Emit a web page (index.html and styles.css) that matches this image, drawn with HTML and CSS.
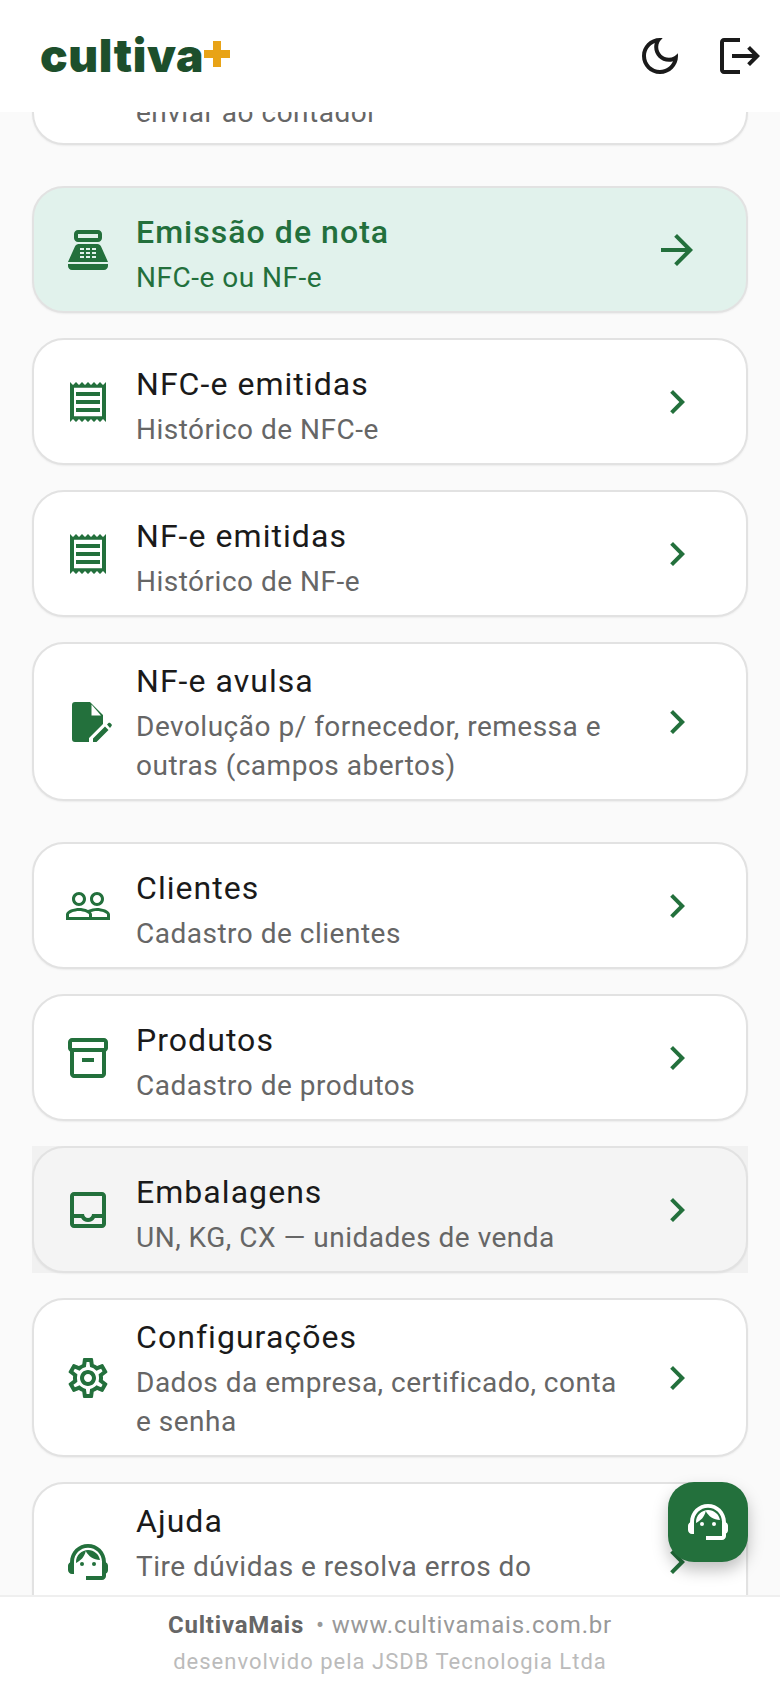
FILE: index.html
```html
<!DOCTYPE html>
<html lang="pt-BR">
<head>
  <meta charset="UTF-8">
  <meta name="viewport" content="width=device-width, initial-scale=1.0">
  <title>CultivaMais</title>
  <link rel="stylesheet" href="styles.css">
</head>
<body>
  <header class="topbar">
    <div class="logo">
      <span class="logo-text">cultiva</span>
      <svg class="logo-plus" viewBox="0 0 26 26"><path d="M9 0h8v9h9v8h-9v9H9v-9H0V9h9z"/></svg>
    </div>
    <div class="topbar-actions">
      <svg class="icon" viewBox="0 0 24 24"><path d="M9.37,5.51C9.19,6.15,9.1,6.82,9.1,7.5c0,4.08,3.32,7.4,7.4,7.4c0.68,0,1.35-0.09,1.99-0.27C17.45,17.19,14.93,19,12,19 c-3.86,0-7-3.14-7-7C5,9.07,6.81,6.55,9.37,5.51z M12,3c-4.97,0-9,4.03-9,9s4.03,9,9,9s9-4.03,9-9c0-0.46-0.04-0.92-0.1-1.36 c-0.98,1.37-2.58,2.26-4.4,2.26c-2.98,0-5.4-2.42-5.4-5.4c0-1.81,0.89-3.42,2.26-4.4C12.92,3.04,12.46,3,12,3L12,3z"/></svg>
      <svg class="icon" viewBox="0 0 24 24"><path d="M17 7l-1.41 1.41L18.17 11H8v2h10.17l-2.58 2.58L17 17l5-5zM4 5h8V3H4c-1.1 0-2 .9-2 2v14c0 1.1.9 2 2 2h8v-2H4V5z"/></svg>
    </div>
  </header>

  <main class="content">
    <div class="menu">
      <section class="group">
        <div class="card card-clipped">
          <div class="card-text card-text-clipped">
            <p class="card-sub">enviar ao contador</p>
          </div>
        </div>
      </section>

      <section class="group">
        <a class="card card-active">
          <svg class="icon card-icon" viewBox="0 0 24 24"><path fill-rule="evenodd" d="M17 2H7c-1.1 0-2 .9-2 2v2c0 1.1.9 2 2 2h10c1.1 0 2-.9 2-2V4c0-1.1-.9-2-2-2zm0 4H7V4h10v2zM20 22H4c-1.1 0-2-.9-2-2v-1h20v1c0 1.1-.9 2-2 2zM18.53 10.19C18.21 9.47 17.49 9 16.7 9H7.3c-.79 0-1.51.47-1.83 1.19L2 18h20l-3.47-7.81zM8 11h2v1H8zm3 0h2v1h-2zm3 0h2v1h-2zM8 13h2v1H8zm3 0h2v1h-2zm3 0h2v1h-2zM8 15h2v1H8zm3 0h2v1h-2zm3 0h2v1h-2z"/></svg>
          <div class="card-text">
            <h2 class="card-title">Emissão de nota</h2>
            <p class="card-sub">NFC-e ou NF-e</p>
          </div>
          <svg class="icon card-arrow" viewBox="0 0 24 24"><path d="M12 4l-1.41 1.41L16.17 11H4v2h12.17l-5.58 5.59L12 20l8-8z"/></svg>
        </a>

        <a class="card">
          <svg class="icon card-icon" viewBox="0 0 24 24"><path d="M19.5 3.5L18 2l-1.5 1.5L15 2l-1.5 1.5L12 2l-1.5 1.5L9 2 7.5 3.5 6 2 4.5 3.5 3 2v20l1.5-1.5L6 22l1.5-1.5L9 22l1.5-1.5L12 22l1.5-1.5L15 22l1.5-1.5L18 22l1.5-1.5L21 22V2l-1.5 1.5zM19 19.09H5V4.91h14v14.18zM6 15h12v2H6zm0-4h12v2H6zm0-4h12v2H6z"/></svg>
          <div class="card-text">
            <h2 class="card-title">NFC-e emitidas</h2>
            <p class="card-sub">Histórico de NFC-e</p>
          </div>
          <svg class="icon card-chevron" viewBox="0 0 24 24"><path d="M10 6L8.59 7.41 13.17 12l-4.58 4.59L10 18l6-6z"/></svg>
        </a>

        <a class="card">
          <svg class="icon card-icon" viewBox="0 0 24 24"><path d="M19.5 3.5L18 2l-1.5 1.5L15 2l-1.5 1.5L12 2l-1.5 1.5L9 2 7.5 3.5 6 2 4.5 3.5 3 2v20l1.5-1.5L6 22l1.5-1.5L9 22l1.5-1.5L12 22l1.5-1.5L15 22l1.5-1.5L18 22l1.5-1.5L21 22V2l-1.5 1.5zM19 19.09H5V4.91h14v14.18zM6 15h12v2H6zm0-4h12v2H6zm0-4h12v2H6z"/></svg>
          <div class="card-text">
            <h2 class="card-title">NF-e emitidas</h2>
            <p class="card-sub">Histórico de NF-e</p>
          </div>
          <svg class="icon card-chevron" viewBox="0 0 24 24"><path d="M10 6L8.59 7.41 13.17 12l-4.58 4.59L10 18l6-6z"/></svg>
        </a>

        <a class="card card-tall">
          <svg class="icon card-icon" viewBox="0 0 48 48"><path d="M11 4h15l13 13v9L25 40v4H11c-2 0-3-1.300-3-3V7c0-1.700 1-3 3-3z"/><path class="icon-cut" d="M27.500 6.500L37 17.500h-9.500z"/><path d="M29 44v-3.500L41 28.500l3.500 3.500-12 12zM43 26.500l1.500-1.500c.5-.5 1.200-.5 1.700 0l1.300 1.300c.5.500.5 1.200 0 1.700L46 30z"/></svg>
          <div class="card-text">
            <h2 class="card-title">NF-e avulsa</h2>
            <p class="card-sub">Devolução p/ fornecedor, remessa e outras (campos abertos)</p>
          </div>
          <svg class="icon card-chevron" viewBox="0 0 24 24"><path d="M10 6L8.59 7.41 13.17 12l-4.58 4.59L10 18l6-6z"/></svg>
        </a>
      </section>

      <section class="group">
        <a class="card">
          <svg class="icon card-icon" viewBox="0 0 24 24"><path d="M16.5 13c-1.2 0-3.07.34-4.5 1-1.43-.67-3.3-1-4.5-1C5.33 13 1 14.08 1 16.25V19h22v-2.75c0-2.170-4.33-3.25-6.500-3.25zm-4 4.500h-10v-1.250c0-.54 2.560-1.750 5-1.750s5 1.210 5 1.750v1.250zm9 0H14v-1.250c0-.46-.2-.86-.52-1.220.88-.3 1.960-.53 3.020-.53 2.440 0 5 1.210 5 1.750v1.250zM7.500 12c1.930 0 3.500-1.570 3.500-3.500S9.430 5 7.500 5 4 6.570 4 8.500 5.570 12 7.500 12zm0-5.500c1.100 0 2 .9 2 2s-.9 2-2 2-2-.9-2-2 .9-2 2-2zm9 5.500c1.930 0 3.500-1.570 3.500-3.500S18.430 5 16.500 5 13 6.570 13 8.500s1.570 3.500 3.500 3.500zm0-5.500c1.100 0 2 .9 2 2s-.9 2-2 2-2-.9-2-2 .9-2 2-2z"/></svg>
          <div class="card-text">
            <h2 class="card-title">Clientes</h2>
            <p class="card-sub">Cadastro de clientes</p>
          </div>
          <svg class="icon card-chevron" viewBox="0 0 24 24"><path d="M10 6L8.59 7.41 13.17 12l-4.58 4.59L10 18l6-6z"/></svg>
        </a>

        <a class="card">
          <svg class="icon card-icon" viewBox="0 0 24 24"><path d="M20 2H4c-1 0-2 .9-2 2v3.010c0 .72.43 1.340 1 1.690V20c0 1.100 1.100 2 2 2h14c.9 0 2-.9 2-2V8.700c.57-.35 1-.97 1-1.690V4c0-1.100-1-2-2-2zm-1 18H5V9h14v11zm1-13H4V4h16v3zM9 12h6v2H9z"/></svg>
          <div class="card-text">
            <h2 class="card-title">Produtos</h2>
            <p class="card-sub">Cadastro de produtos</p>
          </div>
          <svg class="icon card-chevron" viewBox="0 0 24 24"><path d="M10 6L8.59 7.41 13.17 12l-4.58 4.59L10 18l6-6z"/></svg>
        </a>

        <div class="card-pressed">
          <a class="card">
            <svg class="icon card-icon" viewBox="0 0 24 24"><path d="M19 3H5c-1.100 0-2 .9-2 2v14c0 1.100.9 2 2 2h14c1.100 0 2-.9 2-2V5c0-1.100-.9-2-2-2zm0 16H5v-3h3.560c.69 1.190 1.970 2 3.450 2s2.750-.81 3.450-2H19v3zm0-5h-4.990c0 1.100-.9 2-2 2s-2-.9-2-2H5V5h14v9z"/></svg>
            <div class="card-text">
              <h2 class="card-title">Embalagens</h2>
              <p class="card-sub">UN, KG, CX — unidades de venda</p>
            </div>
            <svg class="icon card-chevron" viewBox="0 0 24 24"><path d="M10 6L8.59 7.41 13.17 12l-4.58 4.59L10 18l6-6z"/></svg>
          </a>
        </div>

        <a class="card card-tall">
          <svg class="icon card-icon" viewBox="0 0 24 24"><path d="M19.43 12.98c.04-.32.07-.64.07-.98 0-.34-.03-.66-.07-.98l2.11-1.65c.19-.15.24-.42.12-.64l-2-3.46c-.09-.16-.26-.25-.44-.25-.06 0-.12.01-.17.03l-2.49 1c-.52-.4-1.08-.73-1.69-.98l-.38-2.65C14.46 2.18 14.25 2 14 2h-4c-.25 0-.46.18-.49.42l-.38 2.65c-.61.25-1.17.59-1.69.98l-2.49-1c-.06-.02-.12-.03-.18-.03-.17 0-.34.09-.43.25l-2 3.46c-.13.22-.07.49.12.64l2.11 1.65c-.04.32-.07.65-.07.98 0 .33.03.66.07.98l-2.11 1.65c-.19.15-.24.42-.12.64l2 3.46c.09.16.26.25.44.25.06 0 .12-.01.17-.03l2.49-1c.52.4 1.08.73 1.69.98l.38 2.65c.03.24.24.42.49.42h4c.25 0 .46-.18.49-.42l.38-2.65c.61-.25 1.17-.59 1.69-.98l2.49 1c.06.02.12.03.18.03.17 0 .34-.09.43-.25l2-3.46c.12-.22.07-.49-.12-.64l-2.11-1.65zm-1.98-1.71c.04.31.05.52.05.73 0 .21-.02.43-.05.73l-.14 1.13.89.7 1.08.84-.7 1.21-1.27-.51-1.04-.42-.9.68c-.43.32-.84.56-1.25.73l-1.06.43-.16 1.13-.2 1.35h-1.4l-.19-1.35-.16-1.13-1.06-.43c-.43-.18-.83-.41-1.23-.71l-.91-.7-1.06.43-1.27.51-.7-1.21 1.08-.84.89-.7-.14-1.13c-.03-.31-.05-.54-.05-.74s.02-.43.05-.73l.14-1.13-.89-.7-1.08-.84.7-1.21 1.27.51 1.04.42.9-.68c.43-.32.84-.56 1.25-.73l1.06-.43.16-1.13.2-1.35h1.39l.19 1.35.16 1.13 1.06.43c.43.18.83.41 1.23.71l.91.7 1.06-.43 1.27-.51.7 1.21-1.07.85-.89.7.14 1.13zM12 8c-2.210 0-4 1.790-4 4s1.790 4 4 4 4-1.790 4-4-1.790-4-4-4zm0 6c-1.100 0-2-.9-2-2s.9-2 2-2 2 .9 2 2-.9 2-2 2z"/></svg>
          <div class="card-text">
            <h2 class="card-title">Configurações</h2>
            <p class="card-sub">Dados da empresa, certificado, conta e senha</p>
          </div>
          <svg class="icon card-chevron" viewBox="0 0 24 24"><path d="M10 6L8.59 7.41 13.17 12l-4.58 4.59L10 18l6-6z"/></svg>
        </a>

        <a class="card card-tall card-cut">
          <svg class="icon card-icon" viewBox="0 0 24 24"><path d="M21 12.220C21 6.730 16.740 3 12 3c-4.690 0-9 3.650-9 9.280-.6.34-1 .98-1 1.720v2c0 1.100.9 2 2 2h1v-6.100c0-3.870 3.130-7 7-7s7 3.130 7 7V19h-8v2h8c1.100 0 2-.9 2-2v-1.220c.59-.31 1-.92 1-1.620v-2.300c0-.7-.41-1.310-1-1.640z"/><circle cx="9" cy="13" r="1"/><circle cx="15" cy="13" r="1"/><path d="M18 11.030C17.520 8.180 15.040 6 12.050 6c-3.030 0-6.290 2.510-6.030 6.450 2.470-1.010 4.330-3.210 4.860-5.890 1.310 2.630 4 4.440 7.120 4.470z"/></svg>
          <div class="card-text">
            <h2 class="card-title">Ajuda</h2>
            <p class="card-sub">Tire dúvidas e resolva erros do</p>
          </div>
          <svg class="icon card-chevron" viewBox="0 0 24 24"><path d="M10 6L8.59 7.41 13.17 12l-4.58 4.59L10 18l6-6z"/></svg>
        </a>
      </section>
    </div>

    <button class="fab">
      <svg class="icon" viewBox="0 0 24 24"><path d="M21 12.220C21 6.730 16.740 3 12 3c-4.690 0-9 3.650-9 9.280-.6.34-1 .98-1 1.720v2c0 1.100.9 2 2 2h1v-6.100c0-3.870 3.130-7 7-7s7 3.130 7 7V19h-8v2h8c1.100 0 2-.9 2-2v-1.220c.59-.31 1-.92 1-1.620v-2.300c0-.7-.41-1.310-1-1.640z"/><circle cx="9" cy="13" r="1"/><circle cx="15" cy="13" r="1"/><path d="M18 11.030C17.520 8.180 15.040 6 12.050 6c-3.030 0-6.290 2.510-6.030 6.450 2.470-1.010 4.330-3.210 4.860-5.890 1.310 2.630 4 4.440 7.120 4.470z"/></svg>
    </button>
  </main>

  <footer class="footer">
    <p class="footer-line"><strong class="footer-brand">CultivaMais</strong><span class="footer-site">• www.cultivamais.com.br</span></p>
    <p class="footer-credit">desenvolvido pela JSDB Tecnologia Ltda</p>
  </footer>
</body>
</html>
```

FILE: styles.css
```css
* {
  box-sizing: border-box;
}

body {
  margin: 0;
  height: 100vh;
  display: flex;
  flex-direction: column;
  overflow: hidden;
  font-family: 'Roboto', sans-serif;
  background: #fafafa;
  color: #1a1a1a;
}

.icon {
  width: 48px;
  height: 48px;
  flex: none;
  fill: currentColor;
  display: block;
}

/* top bar */
.topbar {
  height: 112px;
  flex: none;
  display: flex;
  align-items: center;
  justify-content: space-between;
  padding: 0 16px 0 40px;
  background: #fff;
  position: relative;
  z-index: 2;
}

.logo {
  display: flex;
  align-items: center;
  margin-top: -2px;
}

.logo-text {
  font-family: 'Inter', sans-serif;
  font-size: 46px;
  font-weight: 900;
  line-height: 46px;
  letter-spacing: 0.6px;
  color: #1d4f2c;
}

.logo-plus {
  width: 26px;
  height: 26px;
  margin-bottom: 3px;
  fill: #e8a317;
}

.topbar-actions {
  display: flex;
  gap: 32px;
}

/* scrolled list */
.content {
  flex: 1;
  min-height: 0;
  overflow: hidden;
  position: relative;
}

.menu {
  display: flex;
  flex-direction: column;
  gap: 41px;
  padding: 0 32px;
}

.group {
  display: flex;
  flex-direction: column;
  gap: 25px;
}

.card {
  display: flex;
  align-items: center;
  min-height: 127px;
  padding: 11px 30px;
  background: #fff;
  border: 2px solid #e2e2e2;
  border-radius: 32px;
  box-shadow: 0 1px 2px rgba(0, 0, 0, 0.06);
}

/* card scrolled under the top bar */
.card-clipped {
  min-height: 0;
  height: 64px;
  margin-top: -31px;
  border-radius: 0 0 32px 32px;
  align-items: flex-end;
}

.card-text {
  flex: 1;
  min-width: 0;
  margin-left: 24px;
  padding: 10px 20px 0 0;
}

.card-tall {
  min-height: 159px;
}

.card-tall .card-text {
  padding-top: 6px;
  padding-bottom: 3px;
}

/* second line of the sub text lies behind the footer */
.card-cut .card-text {
  padding-bottom: 42px;
}

.card-text-clipped {
  margin-left: 72px;
  padding-top: 0;
}

.card-icon {
  color: #23703c;
}

.card-title {
  margin: 0 0 6px;
  font-size: 32px;
  font-weight: 400;
  line-height: 40px;
  letter-spacing: 1.05px;
  color: #1a1a1a;
}

.card-sub {
  margin: 0;
  font-size: 28px;
  line-height: 39px;
  letter-spacing: 0.5px;
  color: #666;
}

.card-chevron,
.card-arrow {
  color: #23703c;
}

.card-chevron {
  margin-right: 15px;
}

.card-arrow {
  margin-right: 15px;
}

.card-active {
  background: #e1f2ec;
}

.card-active .card-title {
  font-weight: 500;
  color: #23703c;
}

.card-active .card-sub {
  color: #23703c;
}

.icon-cut {
  fill: #fff;
}

.card-pressed {
  background: #f1f1f1;
}

.card-pressed .card {
  background: #f4f4f4;
}

/* help button */
.fab {
  position: absolute;
  right: 32px;
  bottom: 33px;
  width: 80px;
  height: 80px;
  display: flex;
  align-items: center;
  justify-content: center;
  padding: 0;
  border: none;
  border-radius: 26px;
  background: #23703c;
  color: #fff;
  box-shadow: 0 8px 16px rgba(0, 0, 0, 0.25);
}

/* footer */
.footer {
  height: 93px;
  flex: none;
  padding-top: 12px;
  background: #fff;
  border-top: 2px solid #efefef;
  text-align: center;
  position: relative;
  z-index: 2;
}

.footer-line {
  margin: 0;
  font-size: 24px;
  line-height: 32px;
  letter-spacing: 0.8px;
  color: #999;
}

.footer-brand {
  font-weight: 700;
  color: #666;
  margin-right: 12px;
}

.footer-credit {
  margin: 6px 0 0;
  font-size: 22px;
  line-height: 30px;
  letter-spacing: 1px;
  color: #bbb;
}
```
